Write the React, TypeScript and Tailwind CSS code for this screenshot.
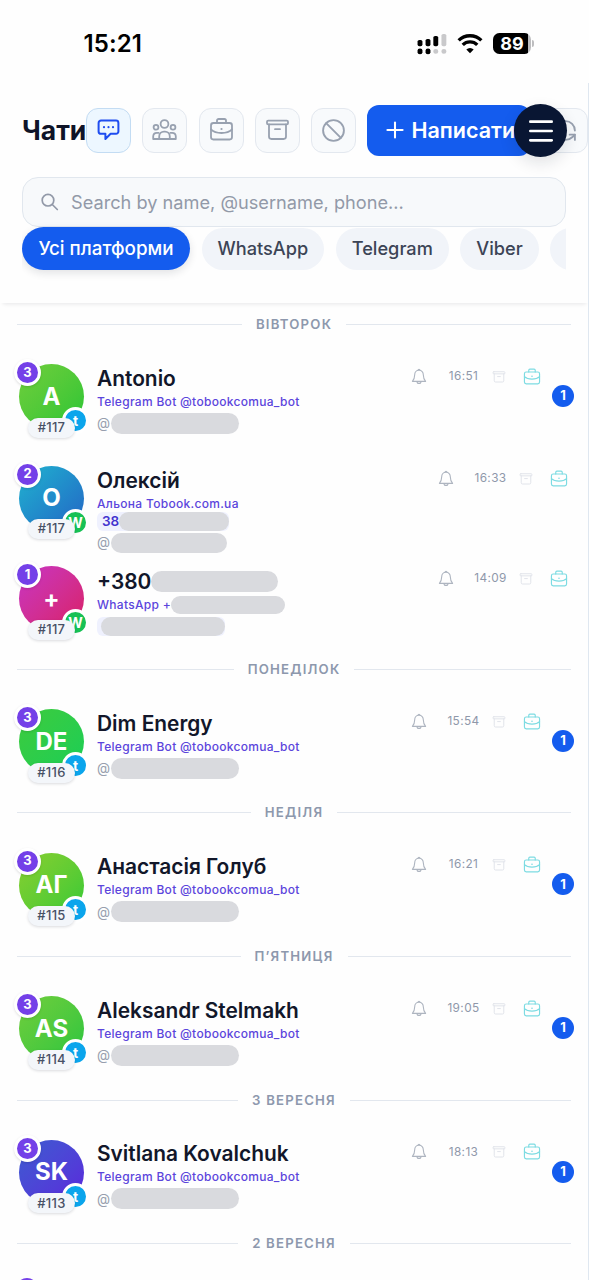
import React from "react";
import { Ban, Menu, Plus, RefreshCcw } from "lucide-react";
import clsx from "clsx";

type Messenger = "telegram" | "whatsapp";

interface Chat {
  name: string;
  nameMask?: string;
  initials: string;
  gradient: string;
  count: number;
  tag: string;
  messenger: Messenger;
  channel: string;
  channelMask?: string;
  phone?: string;
  phoneMask?: string;
  phoneOffset?: string;
  handleMask?: string;
  time: string;
  unread?: number;
}

interface Day {
  label: string;
  chats: Chat[];
}

const BOT = "Telegram Bot @tobookcomua_bot";

const DAYS: Day[] = [
  {
    label: "ВІВТОРОК",
    chats: [
      {
        name: "Antonio",
        initials: "A",
        gradient: "from-[#6fce3c] to-[#22c535]",
        count: 3,
        tag: "#117",
        messenger: "telegram",
        channel: BOT,
        handleMask: "w-[128px] h-[21px]",
        time: "16:51",
        unread: 1,
      },
      {
        name: "Олексій",
        initials: "О",
        gradient: "from-[#22b3cf] to-[#2563c4]",
        count: 2,
        tag: "#117",
        messenger: "whatsapp",
        channel: "Альона Tobook.com.ua",
        phone: "38",
        phoneMask: "w-[110px]",
        phoneOffset: "-mt-1 pl-[5px]",
        handleMask: "w-[116px] h-5",
        time: "16:33",
      },
      {
        name: "+380",
        nameMask: "w-[127px]",
        initials: "+",
        gradient: "from-[#c832c4] to-[#da1a63]",
        count: 1,
        tag: "#117",
        messenger: "whatsapp",
        channel: "WhatsApp +",
        channelMask: "w-[114px]",
        phone: "",
        phoneMask: "w-[124px]",
        phoneOffset: "mt-px pl-[3.5px]",
        time: "14:09",
      },
    ],
  },
  {
    label: "ПОНЕДІЛОК",
    chats: [
      {
        name: "Dim Energy",
        initials: "DE",
        gradient: "from-[#3ccb3c] to-[#16ce56]",
        count: 3,
        tag: "#116",
        messenger: "telegram",
        channel: BOT,
        handleMask: "w-[128px] h-[21px]",
        time: "15:54",
        unread: 1,
      },
    ],
  },
  {
    label: "НЕДІЛЯ",
    chats: [
      {
        name: "Анастасія Голуб",
        initials: "АГ",
        gradient: "from-[#86cf30] to-[#2cc936]",
        count: 3,
        tag: "#115",
        messenger: "telegram",
        channel: BOT,
        handleMask: "w-[128px] h-[21px]",
        time: "16:21",
        unread: 1,
      },
    ],
  },
  {
    label: "П’ЯТНИЦЯ",
    chats: [
      {
        name: "Aleksandr Stelmakh",
        initials: "AS",
        gradient: "from-[#6fce3c] to-[#22c53f]",
        count: 3,
        tag: "#114",
        messenger: "telegram",
        channel: BOT,
        handleMask: "w-[128px] h-[21px]",
        time: "19:05",
        unread: 1,
      },
    ],
  },
  {
    label: "3 ВЕРЕСНЯ",
    chats: [
      {
        name: "Svitlana Kovalchuk",
        initials: "SK",
        gradient: "from-[#3a5bd0] to-[#5a22dc]",
        count: 3,
        tag: "#113",
        messenger: "telegram",
        channel: BOT,
        handleMask: "w-[128px] h-[21px]",
        time: "18:13",
        unread: 1,
      },
    ],
  },
  {
    label: "2 ВЕРЕСНЯ",
    chats: [],
  },
];

const PLATFORMS = ["WhatsApp", "Telegram", "Viber"];

/* ── Icons ── */
function Icon({
  className,
  width = 1.8,
  children,
}: {
  className: string;
  width?: number;
  children: React.ReactNode;
}) {
  return (
    <svg
      viewBox="0 0 25 24"
      fill="none"
      stroke="currentColor"
      strokeWidth={width}
      strokeLinecap="round"
      strokeLinejoin="round"
      className={clsx("shrink-0", className)}
    >
      {children}
    </svg>
  );
}

function ChatIcon() {
  return (
    <Icon className="h-6 w-[25px]" width={2}>
      <path d="M5 2.6h15a2.4 2.4 0 0 1 2.4 2.4v8.4a2.4 2.4 0 0 1-2.4 2.4h-5.4L9.4 21v-5.2H5A2.4 2.4 0 0 1 2.6 13.4V5A2.4 2.4 0 0 1 5 2.6Z" />
      <path d="M8 9.2h.01M12.5 9.2h.01M17 9.2h.01" strokeWidth={2.2} />
    </Icon>
  );
}

function PeopleIcon() {
  return (
    <Icon className="h-6 w-[25px]">
      <circle cx="12.5" cy="6" r="3.9" />
      <circle cx="4" cy="9.3" r="2.4" />
      <circle cx="21" cy="9.3" r="2.4" />
      <path d="M7.2 21v-2.6a4.8 4.8 0 0 1 4.8-4.8h1a4.8 4.8 0 0 1 4.8 4.8V21Z" />
      <path d="M7.2 21H1.2v-2.8a3.6 3.6 0 0 1 3.6-3.4h1.8M17.8 21h6v-2.8a3.6 3.6 0 0 0-3.6-3.4h-1.8" />
    </Icon>
  );
}

function BriefcaseIcon({ className, width }: { className: string; width?: number }) {
  return (
    <Icon className={className} width={width}>
      <rect x="2" y="5" width="21" height="16.5" rx="2.4" />
      <path d="M8 5V2.6A1.6 1.6 0 0 1 9.6 1h5.8A1.6 1.6 0 0 1 17 2.6V5" />
      <path d="M2 11.4c2.4 2.4 6 3.6 10.5 3.6s8.1-1.2 10.5-3.6" />
      <path d="M12.5 11h.01" strokeWidth={2.2} />
    </Icon>
  );
}

function ArchiveIcon({ className, width }: { className: string; width?: number }) {
  return (
    <Icon className={className} width={width}>
      <rect x="2" y="2.6" width="21" height="3.8" rx="1.2" />
      <path d="M4 6.4v12.2a2.4 2.4 0 0 0 2.4 2.4h12.2a2.4 2.4 0 0 0 2.4-2.4V6.4" />
      <path d="M10 11.2h5" />
    </Icon>
  );
}

function SearchIcon() {
  return (
    <svg
      viewBox="0 0 20 20"
      fill="none"
      stroke="currentColor"
      strokeWidth="1.7"
      strokeLinecap="round"
      className="size-5 shrink-0"
    >
      <circle cx="8" cy="8.2" r="5.8" />
      <path d="M12.3 12.5l5 5" />
    </svg>
  );
}

function BellIcon() {
  return (
    <svg
      viewBox="0 0 16 18"
      fill="none"
      stroke="currentColor"
      strokeWidth="1.1"
      strokeLinejoin="round"
      className="h-[18px] w-4 text-[#aeb5c0]"
    >
      <path d="M8 2.3c-2.7 0-4.3 1.9-4.3 4.5 0 3.6-.8 4.9-2.3 6.6h13.2c-1.5-1.7-2.3-3-2.3-6.6 0-2.6-1.6-4.5-4.3-4.5Z" />
      <path d="M7.1 2.3a.9.9 0 1 1 1.8 0M6 13.4a2 2 0 0 0 4 0" />
    </svg>
  );
}

/* ── Status bar ── */
function StatusBar() {
  return (
    <div className="flex h-[83px] items-start justify-between pt-[31px] pr-[55px] pl-[83.5px]">
      <span className="text-[24px] leading-[26px] font-semibold tracking-[0.1px] text-black">15:21</span>
      <div className="flex h-[25px] items-center gap-[10px]">
        <svg viewBox="0 0 27 22" preserveAspectRatio="none" className="h-[22px] w-[30px]">
          <g fill="#000">
            <rect x="0.5" y="7" width="4.4" height="6.2" rx="1.6" />
            <rect x="7.7" y="6" width="4.4" height="7.2" rx="1.6" />
            <rect x="14.7" y="3" width="4.4" height="10.2" rx="1.6" />
            <rect x="0.5" y="15.5" width="4.4" height="5.8" rx="2.1" />
            <rect x="7.7" y="15.5" width="4.4" height="5.8" rx="2.1" />
          </g>
          <g fill="#c9c9cb">
            <rect x="22" y="1" width="4.4" height="12.2" rx="1.6" />
            <rect x="14.7" y="16" width="4.4" height="4.8" rx="2.1" />
            <rect x="22" y="16" width="4.4" height="4.8" rx="2.1" />
          </g>
        </svg>
        <svg viewBox="0 0 24 20" fill="none" stroke="#000" strokeWidth="3.2" className="h-[21px] w-[26px]">
          <path d="M1.2 7a15.4 15.4 0 0 1 21.6 0" />
          <path d="M5.1 11.3a9.8 9.8 0 0 1 13.8 0" />
          <path d="M12 19.4l-3.5-3.7a5 5 0 0 1 7 0Z" fill="#000" stroke="none" />
        </svg>
        <div className="flex items-center gap-px">
          <div className="flex h-[21px] w-[38px] items-center overflow-hidden rounded-[6.5px] bg-[#bdbdbf]">
            <span className="flex h-full w-[35px] items-center justify-center bg-black pl-[3px] text-[18px] leading-none font-bold text-white">
              89
            </span>
          </div>
          <div className="h-[7px] w-[2px] rounded-r-full bg-[#bdbdbf]" />
        </div>
      </div>
    </div>
  );
}

/* ── Header ── */
function ToolButton({ active, children }: { active?: boolean; children: React.ReactNode }) {
  return (
    <button
      className={clsx(
        "flex size-[45px] shrink-0 items-center justify-center rounded-xl border",
        active ? "border-[#c3dcf3] bg-[#edf7ff] text-[#1f4df0]" : "border-[#e3e8ef] bg-[#f8fafc] text-[#98a1b0]"
      )}
    >
      {children}
    </button>
  );
}

function Header() {
  return (
    <header className="h-[220px] border-r border-[#dfe7f0] pt-[21px] pl-[22px] shadow-[0_4px_4px_-3px_rgba(15,23,42,0.1)]">
      <div className="relative flex h-[52px] items-center">
        <h1 className="w-16 shrink-0 text-[26.5px] leading-8 font-bold whitespace-nowrap text-[#0f1428]">Чати</h1>
        <div className="flex items-center gap-[11.3px]">
          <ToolButton active>
            <ChatIcon />
          </ToolButton>
          <ToolButton>
            <PeopleIcon />
          </ToolButton>
          <ToolButton>
            <BriefcaseIcon className="h-6 w-[25px]" />
          </ToolButton>
          <ToolButton>
            <ArchiveIcon className="h-6 w-[25px]" />
          </ToolButton>
          <ToolButton>
            <Ban size={25} strokeWidth={1.8} />
          </ToolButton>
          <button className="flex h-[51px] w-[164px] shrink-0 items-center gap-[3px] rounded-xl bg-[#145cee] pl-[15px] text-[21.5px] font-semibold whitespace-nowrap text-white">
            <Plus size={26} strokeWidth={1.9} className="shrink-0" />
            Написати
          </button>
          <ToolButton>
            <RefreshCcw size={25} strokeWidth={1.8} />
          </ToolButton>
        </div>
        <button className="absolute top-0 left-[492px] flex size-[53px] items-center justify-center rounded-full bg-[#091633] text-white shadow-[0_6px_16px_rgba(15,23,42,0.12)]">
          <Menu size={32} strokeWidth={2} />
        </button>
      </div>

      <div className="mt-[21px] mr-[22px] flex h-[50px] items-center gap-[11px] rounded-2xl border border-[#e1e7ee] bg-[#f7f9fb] pl-[17px] text-[#9299a8]">
        <SearchIcon />
        <span className="pt-px text-[18.2px] whitespace-nowrap">Search by name, @username, phone...</span>
      </div>

      <div className="mr-[22px] flex h-[54px] items-start gap-[11.5px] overflow-x-clip text-[18.2px] font-medium">
        <button className="h-[43px] w-[168px] shrink-0 rounded-full bg-[#145cee] pt-px text-[18.8px] whitespace-nowrap text-white shadow-[0_3px_8px_rgba(15,23,42,0.12)]">
          Усі платформи
        </button>
        {PLATFORMS.map((p) => (
          <button
            key={p}
            className="mt-px h-[42px] shrink-0 rounded-full bg-[#f1f4f9] px-[16px] whitespace-nowrap text-[#3c4456]"
          >
            {p}
          </button>
        ))}
        <button className="mt-px h-[42px] w-32 shrink-0 rounded-full bg-[#f1f4f9]" />
      </div>
    </header>
  );
}

/* ── Chat list ── */
function DayDivider({ label }: { label: string }) {
  return (
    <div className="flex h-[43px] items-center gap-[14px] px-[17px]">
      <div className="h-px flex-1 bg-[#e2e7ee]" />
      <span className="pt-px text-[13.2px] font-semibold tracking-[1.2px] text-[#8d98ad]">{label}</span>
      <div className="h-px flex-1 bg-[#e2e7ee]" />
    </div>
  );
}

function Mask({ className }: { className: string }) {
  return <span className={clsx("shrink-0 rounded-full bg-[#d9dade]", className)} />;
}

function Avatar({ chat }: { chat: Chat }) {
  return (
    <div
      className={clsx(
        "relative flex size-[65px] shrink-0 items-center justify-center rounded-full bg-linear-to-br text-[24px] font-bold text-white",
        chat.messenger === "telegram" ? "mt-[18.3px]" : "mt-[19px]",
        chat.gradient
      )}
    >
      {chat.initials}
      <span className="absolute -top-[5px] -left-[5px] flex size-[27px] items-center justify-center rounded-full border-3 border-white bg-[#7440e8] text-[13px] font-bold shadow-sm">
        {chat.count}
      </span>
      <span
        className={clsx(
          "absolute right-[-5px] bottom-[-5px] flex size-[27px] items-center justify-center rounded-full border-3 border-white text-[14px] font-bold",
          chat.messenger === "telegram" ? "bg-[#0ba5ec]" : "bg-[#17c155]"
        )}
      >
        {chat.messenger === "telegram" ? "t" : "W"}
      </span>
      <span className="absolute bottom-[-8.5px] left-[9px] flex h-5 w-[47px] items-center justify-center rounded-full bg-[#f3f6fa] text-[13px] font-medium tracking-[0.3px] text-[#475065] shadow-[0_1px_3px_rgba(15,23,42,0.15)]">
        {chat.tag}
      </span>
    </div>
  );
}

function ChatRow({ chat }: { chat: Chat }) {
  const bot = chat.messenger === "telegram";
  return (
    <div className="flex h-[100.6px] items-start pr-[14px] pl-[19px]">
      <Avatar chat={chat} />

      <div className={clsx("flex min-w-0 flex-1 flex-col pl-[13px] whitespace-nowrap", bot ? "pt-[20.4px]" : "pt-[22px]")}>
        <div className="flex h-6 items-center text-[20.9px] font-semibold text-[#12172a]">
          {chat.name}
          {chat.nameMask && <Mask className={clsx("h-[21px]", chat.nameMask)} />}
        </div>
        <div className="flex h-[23px] items-center text-[12px] font-medium tracking-[0.3px] text-[#5b45dc]">
          {chat.channel}
          {chat.channelMask && <Mask className={clsx("h-[18px]", chat.channelMask)} />}
        </div>
        {chat.phoneMask && (
          <div className={clsx("flex h-[19px] items-center self-start rounded-md bg-[#eff1fe]", chat.phoneOffset)}>
            <span className="text-[13.5px] font-semibold text-[#4334cf]">{chat.phone}</span>
            <Mask className={clsx("h-[19px]", chat.phoneMask)} />
          </div>
        )}
        {chat.handleMask && (
          <div className={clsx("flex h-5 items-center text-[13.5px] text-[#979eae]", !bot && "mt-0.5")}>
            <span className="w-[13.5px]">@</span>
            <Mask className={chat.handleMask} />
          </div>
        )}
      </div>

      <div className={clsx("flex h-5 items-center", bot ? "mt-[20.8px]" : "mt-[22px] mr-[6px]")}>
        <BellIcon />
        <span className="ml-[20px] w-[33px] text-center text-[11.8px] tracking-[0.4px] whitespace-nowrap text-[#8f98aa]">
          {chat.time}
        </span>
        <ArchiveIcon className="ml-3 h-[14px] w-[14px] text-[#dfe3e9]" width={1.7} />
        <BriefcaseIcon className="ml-[17px] h-[18px] w-[18px] text-[#7cdbe2]" width={1.6} />
      </div>
      {chat.unread && (
        <span className="mt-[39px] ml-[11px] flex size-[22px] items-center justify-center rounded-full bg-[#145cee] text-[13px] font-bold text-white">
          {chat.unread}
        </span>
      )}
    </div>
  );
}

export default function App() {
  return (
    <div className="h-[1280px] w-[589px] overflow-hidden bg-[#fefefe] font-['Inter','Liberation_Sans',sans-serif]">
      <StatusBar />
      <Header />
      <main className="h-[977px] overflow-hidden border-r border-[#dfe7f0]">
        {DAYS.map((day) => (
          <section key={day.label}>
            <DayDivider label={day.label} />
            {day.chats.map((chat) => (
              <ChatRow key={chat.name} chat={chat} />
            ))}
          </section>
        ))}
        {/* top edge of the next row's counter */}
        <div className="mt-[13px] ml-4 size-[22px] rounded-full bg-[#7440e8]" />
      </main>
    </div>
  );
}
